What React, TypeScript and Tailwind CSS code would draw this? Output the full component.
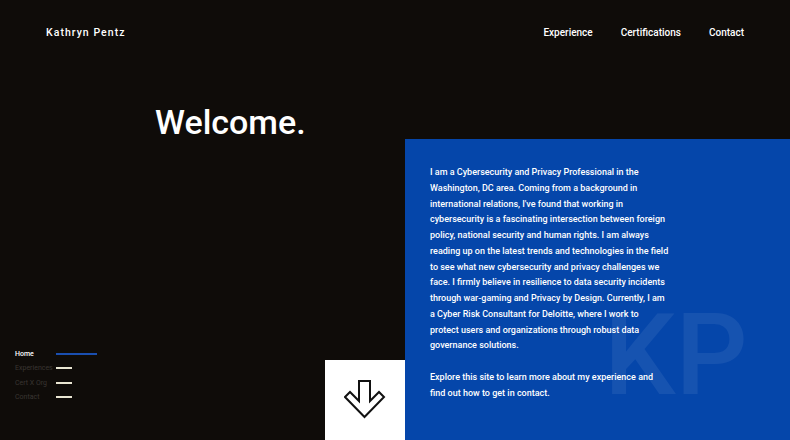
import React from 'react';

const sideLinks = [
  { label: 'Home', active: true },
  { label: 'Experiences', active: false },
  { label: 'Cert X Org', active: false },
  { label: 'Contact', active: false },
];

function DownArrow() {
  return (
    <svg width="42" height="42" viewBox="0 0 42 42" fill="none">
      <path
        d="M15 2 H26 V22 L35 13 L40 18 L20.5 38 L1 18 L6 13 L15 22 Z"
        stroke="#111"
        strokeWidth="2"
        strokeLinejoin="miter"
      />
    </svg>
  );
}

export default function App() {
  return (
    <div className="h-[440px] w-full overflow-hidden bg-[#0f0c09] text-white flex flex-col font-['Roboto',sans-serif]">
      <header className="h-[65px] flex items-center justify-between pl-[46px] pr-[46px]">
        <span className="text-[10.5px] tracking-[0.1em] font-medium">Kathryn Pentz</span>
        <nav className="flex gap-[28px] text-[10px] font-medium">
          <a>Experience</a>
          <a>Certifications</a>
          <a>Contact</a>
        </nav>
      </header>

      <div className="flex-1 flex">
        <div className="w-[405px] flex flex-col">
          <h1 className="pl-[155px] pt-[34px] text-[34px] leading-[46px] font-medium">Welcome.</h1>
          <div className="flex-1 flex items-end justify-between">
            <ul className="pl-[15px] pb-[38px] flex flex-col gap-[5px]">
              {sideLinks.map((l) => (
                <li key={l.label} className="flex items-center h-[9.5px]">
                  <span
                    className={
                      l.active
                        ? 'w-[41px] text-[7px] text-white font-medium'
                        : 'w-[41px] text-[7px] text-[#3a3632]'
                    }
                  >
                    {l.label}
                  </span>
                  <span
                    className={
                      l.active
                        ? 'h-[2px] w-[41px] bg-[#1a4fb0]'
                        : 'h-[2px] w-[16px] bg-[#e9e6d2]'
                    }
                  />
                </li>
              ))}
            </ul>
            <div className="w-[80px] h-[80px] bg-white flex items-center justify-center">
              <DownArrow />
            </div>
          </div>
        </div>

        <div className="flex-1 pt-[74px] flex">
          <section className="relative flex-1 bg-[#0546aa] overflow-hidden">
            <span className="absolute left-[199px] top-[160px] text-[113px] leading-none font-medium text-white/[0.07]">
              KP
            </span>
            <div className="relative w-[239.5px] ml-[25px] pt-[26px] text-[9px] leading-[15.75px] font-medium">
              <p>
                I am a Cybersecurity and Privacy Professional in the Washington, DC area. Coming from
                a background in international relations, I've found that working in cybersecurity is
                a fascinating intersection between foreign policy, national security and human
                rights. I am always reading up on the latest trends and technologies in the field to
                see what new cybersecurity and privacy challenges we face. I firmly believe in
                resilience to data security incidents through war-gaming and Privacy by Design.
                Currently, I am a Cyber Risk Consultant for Deloitte, where I work to protect users
                and organizations through robust data governance solutions.
              </p>
              <p className="mt-[15.75px]">
                Explore this site to learn more about my experience and find out how to get in
                contact.
              </p>
            </div>
          </section>
        </div>
      </div>
    </div>
  );
}
